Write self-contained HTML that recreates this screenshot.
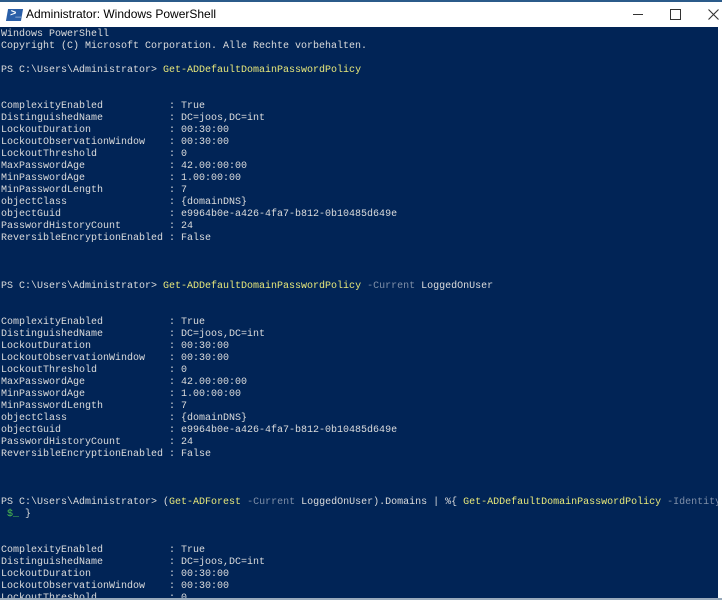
<!DOCTYPE html>
<html><head><meta charset="utf-8"><style>
html,body{margin:0;padding:0;width:722px;height:600px;overflow:hidden;background:#fff;}
#top{position:absolute;left:0;top:0;width:722px;height:2px;background:#2b5b8a;}
#title{position:absolute;left:0;top:2px;width:722px;height:25px;background:#fff;}
#title .t{position:absolute;left:26px;top:5px;font:12px "Liberation Sans",sans-serif;color:#000;}
#icon{position:absolute;left:7px;top:7px;width:15px;height:12px;background:#2a5fa8;transform:skewX(-10deg);}
#icon span{position:absolute;left:3px;top:-1px;color:#fff;font:bold 10px "Liberation Sans",sans-serif;}
.ctl{position:absolute;}
#con{position:absolute;left:0;top:27px;width:718px;height:571px;background:#012456;overflow:hidden;}
pre{margin:0;padding:2px 0 0 1px;font:10px/12px "Liberation Mono",monospace;color:#dcdcdc;white-space:pre;}
.y{color:#e8e87a}.g{color:#7f8fa8}.n{color:#4ec04e}
#bot{position:absolute;left:0;top:598px;width:722px;height:2px;background:#9ab;}
</style></head><body>
<div id="top"></div>
<div id="title"><div id="icon"><span>&gt;_</span></div><div class="t">Administrator: Windows PowerShell</div>
<div class="ctl" style="left:633px;top:12px;width:10px;height:1px;background:#333;"></div>
<div class="ctl" style="left:670px;top:7px;width:9px;height:9px;border:1px solid #333;"></div>
<svg class="ctl" style="left:708px;top:7px" width="11" height="11"><path d="M0.5 0.5L10.5 10.5M10.5 0.5L0.5 10.5" stroke="#333" stroke-width="1.1"/></svg>
</div>
<div id="con"><pre>Windows PowerShell
Copyright (C) Microsoft Corporation. Alle Rechte vorbehalten.

PS C:\Users\Administrator&gt; <span class="y">Get-ADDefaultDomainPasswordPolicy</span>


ComplexityEnabled           : True
DistinguishedName           : DC=joos,DC=int
LockoutDuration             : 00:30:00
LockoutObservationWindow    : 00:30:00
LockoutThreshold            : 0
MaxPasswordAge              : 42.00:00:00
MinPasswordAge              : 1.00:00:00
MinPasswordLength           : 7
objectClass                 : {domainDNS}
objectGuid                  : e9964b0e-a426-4fa7-b812-0b10485d649e
PasswordHistoryCount        : 24
ReversibleEncryptionEnabled : False



PS C:\Users\Administrator&gt; <span class="y">Get-ADDefaultDomainPasswordPolicy</span> <span class="g">-Current</span> LoggedOnUser


ComplexityEnabled           : True
DistinguishedName           : DC=joos,DC=int
LockoutDuration             : 00:30:00
LockoutObservationWindow    : 00:30:00
LockoutThreshold            : 0
MaxPasswordAge              : 42.00:00:00
MinPasswordAge              : 1.00:00:00
MinPasswordLength           : 7
objectClass                 : {domainDNS}
objectGuid                  : e9964b0e-a426-4fa7-b812-0b10485d649e
PasswordHistoryCount        : 24
ReversibleEncryptionEnabled : False



PS C:\Users\Administrator&gt; (<span class="y">Get-ADForest</span> <span class="g">-Current</span> LoggedOnUser).Domains | %{ <span class="y">Get-ADDefaultDomainPasswordPolicy</span> <span class="g">-Identity</span>
 <span class="n">$_</span> }


ComplexityEnabled           : True
DistinguishedName           : DC=joos,DC=int
LockoutDuration             : 00:30:00
LockoutObservationWindow    : 00:30:00
LockoutThreshold            : 0
</pre></div>
<div id="bot"></div>
</body></html>
